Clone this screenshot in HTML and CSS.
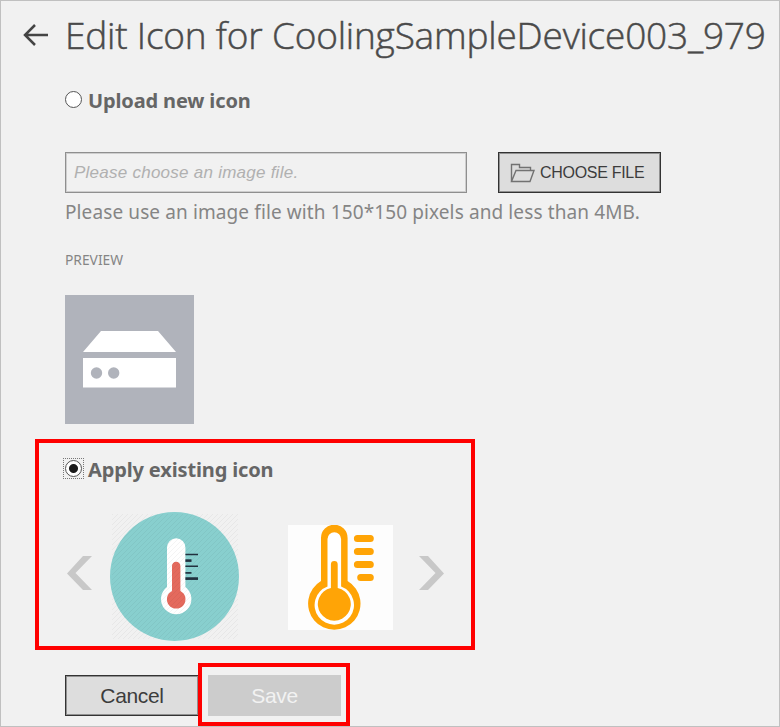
FILE: index.html
```html
<!DOCTYPE html>
<html lang="en">
<head>
<meta charset="utf-8">
<title>Edit Icon</title>
<link rel="stylesheet" href="styles.css">
</head>
<body>
<main class="page">
  <header class="header">
    <svg class="back" width="26" height="24" viewBox="0 0 26 24"><path d="M25 12H2M12 2L2 12L12 22" fill="none" stroke="#444" stroke-width="2.5"/></svg>
    <h1 class="title">Edit Icon for CoolingSampleDevice003_979</h1>
  </header>
  <form class="form">
    <label class="option"><span class="radio"></span><span class="option-text">Upload new icon</span></label>
    <div class="file-row">
      <div class="file-input"><span class="placeholder">Please choose an image file.</span></div>
      <div class="btn choose">
        <svg width="26" height="20" viewBox="0 0 26 20"><path d="M1.5 18.5V1.5H9.5V4.500H20.500V7.500M1.500 18.500L6 7.500H24L20 18.500Z" fill="none" stroke="#727272" stroke-width="1.4"/></svg>
        <span class="choose-text">CHOOSE FILE</span>
      </div>
    </div>
    <p class="help">Please use an image file with 150*150 pixels and less than 4MB.</p>
    <p class="preview-label">PREVIEW</p>
    <svg class="preview" width="129" height="129" viewBox="0 0 129 129"><path fill="#b0b3bb" d="M0 0H129V129H0z"/><path fill="#fff" d="M36 36H93L111 57H18ZM18 63H111V92.500H18z"/><circle cx="31.500" cy="78" r="5.700" fill="#b0b3bb"/><circle cx="48.700" cy="78" r="5.700" fill="#b0b3bb"/></svg>
    <section class="existing">
      <label class="option"><span class="radio checked"></span><span class="option-text">Apply existing icon</span></label>
      <div class="carousel">
        <svg class="arrow" width="25" height="34" viewBox="0 0 25 34"><path d="M16 0H25L8.500 17L25 34H16L0 17.500Z" fill="#c8c8c8"/></svg>
        <svg class="teal" width="129" height="129" viewBox="0 0 129 129">
          <defs><pattern id="hatch" width="5" height="5" patternUnits="userSpaceOnUse"><path d="M-1 1L1 -1M0 5L5 0M4 6L6 4" stroke="#000" stroke-opacity=".05" stroke-width=".9"/></pattern></defs>
          <circle cx="64.500" cy="64.500" r="64.500" fill="#88cfce"/>
          <path d="M57 35.500a9.200 9.200 0 0 1 18.400 0V75a15.200 15.200 0 1 1-18.400 0z" fill="#fff"/>
          <path d="M62 54a4.200 4.200 0 0 1 8.400 0V79a9.300 9.300 0 1 1-8.400 0z" fill="#e46a5d"/>
          <path d="M75.400 42.500H88M75.400 54.300H88" stroke="#22303f" stroke-width="1.500"/><path d="M75.400 48.600H81.500" stroke="#22303f" stroke-width="2.600"/><path d="M75.400 60.900H81.500" stroke="#22303f" stroke-width="1.700"/><path d="M75.400 66.600H88" stroke="#22303f" stroke-width="2.700"/>
          <path d="M2 2H128V127H2z" fill="url(#hatch)"/>
        </svg>
        <svg class="orange" width="105" height="105" viewBox="0 0 105 105">
          <path fill="#fdfdfd" d="M0 0H105V105H0z"/>
          <path d="M33 13a13.300 13.300 0 0 1 26.600 0V56a26.200 26.200 0 1 1-26.600 0z" fill="#ffa406"/>
          <path d="M39.500 14a6.800 6.800 0 0 1 13.600 0V61.500a19.700 19.700 0 1 1-13.600 0z" fill="#fff"/>
          <path d="M42.900 39.500a3.400 3.400 0 0 1 6.800 0V63a16.500 16.500 0 1 1-6.800 0z" fill="#ffa406"/>
          <path d="M69.400 13.500H82.300M69.400 26.500H82.300M69.400 39.500H82.300M72.700 52.500H82.300" stroke="#ffa406" stroke-width="7" stroke-linecap="round"/>
        </svg>
        <svg class="arrow" width="25" height="34" viewBox="0 0 25 34"><path d="M9 0H0L16.500 17L0 34H9L25 17.500Z" fill="#c8c8c8"/></svg>
      </div>
    </section>
    <div class="actions">
      <div class="btn cancel">Cancel</div>
      <div class="save-wrap"><div class="btn save">Save</div></div>
    </div>
  </form>
</main>
</body>
</html>
```
FILE: styles.css
```css
* { box-sizing: border-box; }
body { margin: 0; background: #f1f1f1; }
.page {
  height: 727px;
  border: 1px solid #c0c0c0;
  overflow: hidden;
  font-family: "Noto Sans", "Open Sans", sans-serif;
  color: #666;
}
.header { display: flex; align-items: center; height: 71px; padding-left: 22px; }
.back { flex: none; margin-right: 16px; margin-top: -3px; }
.title {
  margin: -3px 0 0;
  font: 300 37px/50px "Open Sans", sans-serif;
  letter-spacing: -0.2px;
  -webkit-text-stroke: 0.5px #4a4a4a;
  white-space: nowrap;
  color: #4a4a4a;
}
.form { margin-left: 64px; }
.option { display: flex; align-items: center; height: 28px; margin-top: 14px; font-size: 20px; font-weight: 700; letter-spacing: -0.14px; white-space: nowrap; }
.radio { flex: none; width: 17px; height: 17px; margin: -2px 6px 0 0; border: 1px solid #555; border-radius: 50%; background: #fff; }
.checked { position: relative; background: radial-gradient(circle, #1b1b1b 0 4px, #fff 5px); }
.checked::after { content: ""; position: absolute; inset: -3px; border: 1px dotted #777; }
.file-row { display: flex; margin-top: 38px; }
.file-input { display: flex; align-items: center; width: 402px; height: 41px; padding-left: 8px; border: 1px solid #8f8f8f; box-shadow: inset 0 0 0 1px #cecece; font: italic 17px "Liberation Sans", sans-serif; letter-spacing: 0.25px; color: #b0b0b0; }
.btn { display: flex; align-items: center; justify-content: center; height: 41px; border: 1px solid #333; box-shadow: inset 0 0 0 1px #919191; background: #ddd; font-family: "Liberation Sans", sans-serif; color: #3c3c3c; white-space: nowrap; }
.choose { width: 163px; margin-left: 31px; justify-content: flex-start; padding-left: 11px; gap: 4px; font-size: 16px; letter-spacing: -0.3px; }
.help { margin: 5px 0 0; font-size: 19px; line-height: 28px; letter-spacing: 0.11px; color: #858585; white-space: nowrap; }
.preview-label { margin: 24px 0 0; font-size: 13.8px; line-height: 20px; color: #858585; }
.preview { display: block; margin-top: 25px; }
.existing { position: relative; display: flow-root; margin-top: 15px; width: 410px; height: 211px; }
.existing::after { content: ""; position: absolute; inset: 0 0 0 -30px; border: 4px solid #f00; }
.existing .option { margin-top: 16px; }
.carousel { display: flex; align-items: flex-start; margin: 29px 0 0 2px; }
.arrow { margin-top: 44px; }
.teal { margin-left: 18px; }
.orange { margin: 13px 26px 0 49px; }
.actions { display: flex; margin-top: 25px; font-size: 21px; letter-spacing: -0.35px; }
.cancel { width: 134px; }
.save-wrap { position: relative; margin-left: 9px; }
.save-wrap::after { content: ""; position: absolute; inset: -12px -9px -10px -10px; border: 4px solid #f00; }
.save { width: 133px; border-color: #ccc; box-shadow: none; background: #ccc; color: #f2f2f2; }
```
